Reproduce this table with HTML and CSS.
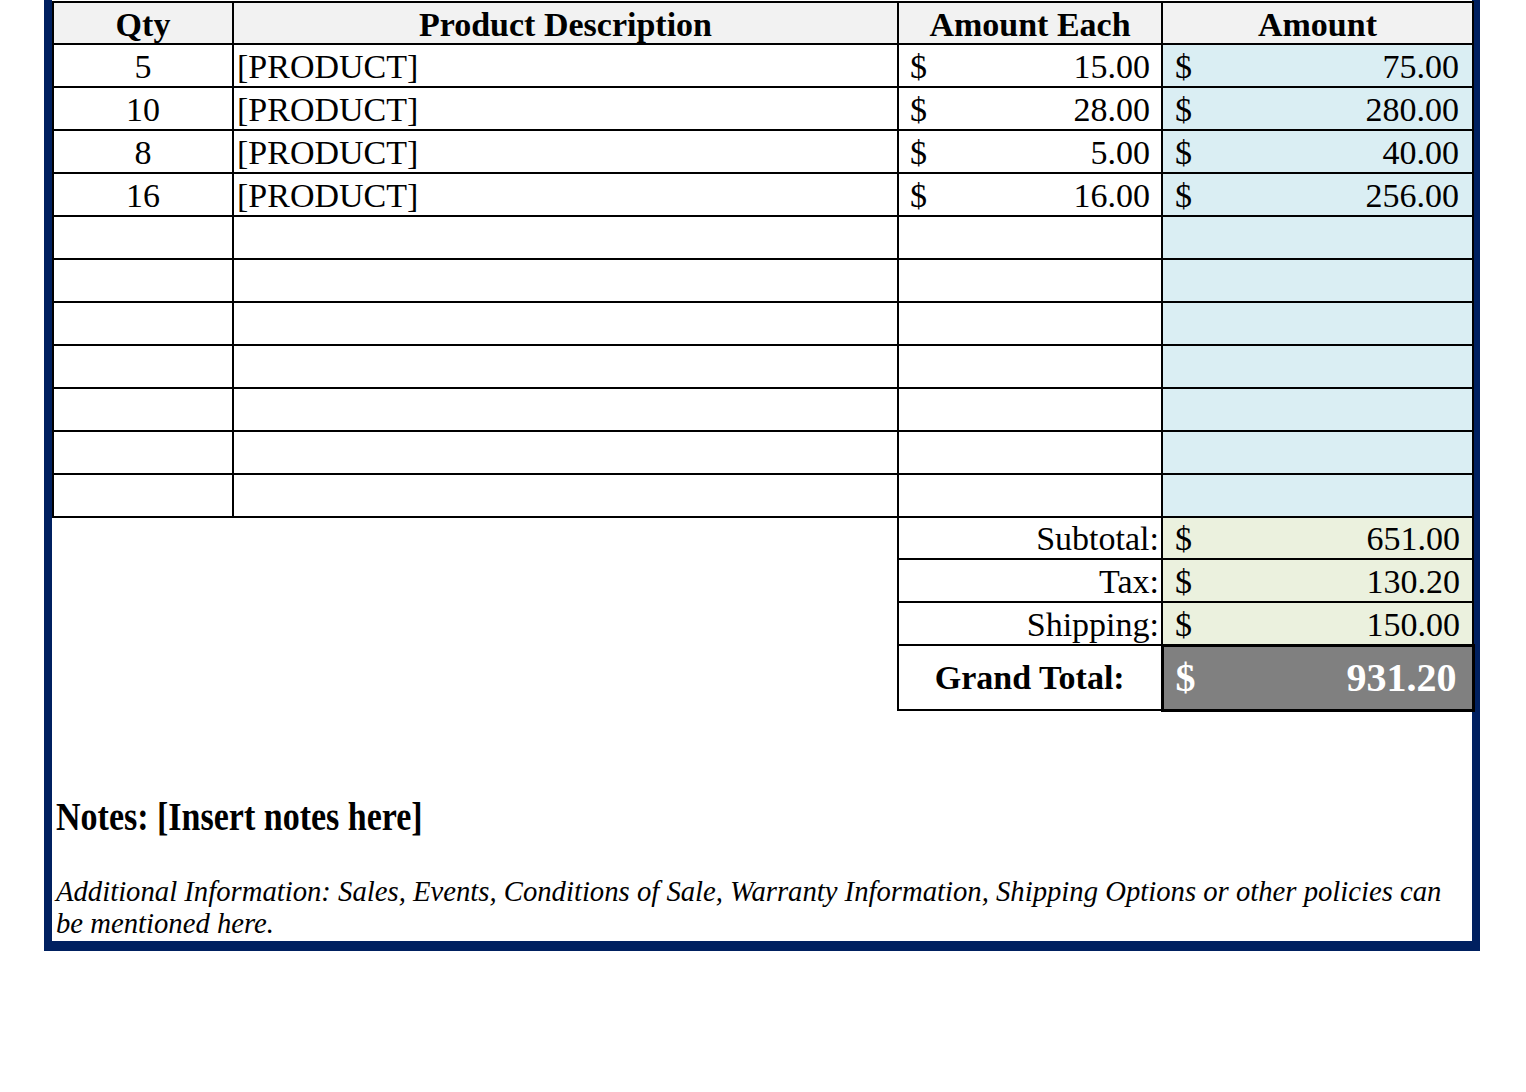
FILE: index.html
```html
<!DOCTYPE html>
<html lang="en">
<head>
<meta charset="utf-8">
<title>Invoice</title>
<link rel="stylesheet" href="styles.css">
</head>
<body>
<div class="sheet">
  <table class="items">
    <colgroup>
      <col class="c-qty">
      <col class="c-desc">
      <col class="c-each">
      <col class="c-amt">
    </colgroup>
    <thead>
      <tr class="head-row">
        <th>Qty</th>
        <th>Product Description</th>
        <th>Amount Each</th>
        <th>Amount</th>
      </tr>
    </thead>
    <tbody>
      <tr class="row">
        <td class="qty">5</td>
        <td class="desc">[PRODUCT]</td>
        <td class="money"><div class="m"><span>$</span><span>15.00</span></div></td>
        <td class="money amt"><div class="m"><span>$</span><span>75.00</span></div></td>
      </tr>
      <tr class="row">
        <td class="qty">10</td>
        <td class="desc">[PRODUCT]</td>
        <td class="money"><div class="m"><span>$</span><span>28.00</span></div></td>
        <td class="money amt"><div class="m"><span>$</span><span>280.00</span></div></td>
      </tr>
      <tr class="row">
        <td class="qty">8</td>
        <td class="desc">[PRODUCT]</td>
        <td class="money"><div class="m"><span>$</span><span>5.00</span></div></td>
        <td class="money amt"><div class="m"><span>$</span><span>40.00</span></div></td>
      </tr>
      <tr class="row">
        <td class="qty">16</td>
        <td class="desc">[PRODUCT]</td>
        <td class="money"><div class="m"><span>$</span><span>16.00</span></div></td>
        <td class="money amt"><div class="m"><span>$</span><span>256.00</span></div></td>
      </tr>
      <tr class="row"><td></td><td></td><td></td><td class="amt"></td></tr>
      <tr class="row"><td></td><td></td><td></td><td class="amt"></td></tr>
      <tr class="row"><td></td><td></td><td></td><td class="amt"></td></tr>
      <tr class="row"><td></td><td></td><td></td><td class="amt"></td></tr>
      <tr class="row"><td></td><td></td><td></td><td class="amt"></td></tr>
      <tr class="row"><td></td><td></td><td></td><td class="amt"></td></tr>
      <tr class="row"><td></td><td></td><td></td><td class="amt"></td></tr>
    </tbody>
    <tfoot>
      <tr class="sub-row first">
        <td class="blank" colspan="2"></td>
        <td class="label">Subtotal:</td>
        <td class="money tot"><div class="m"><span>$</span><span>651.00</span></div></td>
      </tr>
      <tr class="sub-row">
        <td class="blank" colspan="2"></td>
        <td class="label">Tax:</td>
        <td class="money tot"><div class="m"><span>$</span><span>130.20</span></div></td>
      </tr>
      <tr class="sub-row">
        <td class="blank" colspan="2"></td>
        <td class="label">Shipping:</td>
        <td class="money tot"><div class="m"><span>$</span><span>150.00</span></div></td>
      </tr>
      <tr class="grand-row">
        <td class="blank" colspan="2"></td>
        <td class="grand-label">Grand Total:</td>
        <td class="grand"><div class="m"><span>$</span><span>931.20</span></div></td>
      </tr>
    </tfoot>
  </table>
  <p class="notes"><span class="notes-text">Notes: [Insert notes here]</span></p>
  <p class="info">Additional Information: Sales, Events, Conditions of Sale, Warranty Information, Shipping Options or other policies can be mentioned here.</p>
</div>
</body>
</html>
```
FILE: styles.css
```css
html, body {
  margin: 0;
  padding: 0;
  background: #ffffff;
}

body {
  font-family: "Liberation Serif", "Times New Roman", serif;
  color: #000000;
}

.sheet {
  margin-left: 44px;
  width: 1420px;
  border: 8px solid #002060;
  border-top: 0;
  border-bottom-width: 10px;
  padding-top: 1px;
}

.items {
  width: 1420px;
  border-collapse: collapse;
  table-layout: fixed;
  font-size: 34px;
}

.c-qty { width: 180px; }
.c-desc { width: 665px; }
.c-each { width: 264px; }
.c-amt { width: 311px; }

.items th,
.items td {
  border: 2px solid #000000;
  padding: 0;
  line-height: 34px;
  white-space: nowrap;
}

.head-row {
  height: 42px;
  background: #f2f2f2;
}

.items .head-row th {
  font-weight: bold;
  text-align: center;
  vertical-align: middle;
  padding-top: 3px;
}

.row {
  height: 43px;
}

.row td {
  vertical-align: bottom;
  padding-bottom: 2px;
}

.qty {
  text-align: center;
}

.items td.desc {
  padding-left: 3px;
}

.items td.money {
  padding-left: 11px;
  padding-right: 11px;
}

.items td.amt {
  background: #daeef3;
  padding-right: 13px;
}

.m {
  display: flex;
  justify-content: space-between;
}

.items td.amt .m {
  padding-left: 1px;
}

.sub-row {
  height: 43px;
}

.sub-row.first {
  height: 42px;
}

.sub-row td {
  vertical-align: bottom;
  padding-bottom: 2px;
}

.items td.blank {
  border-top: none;
  border-left: none;
  border-bottom: none;
  background: #ffffff;
}

.items td.label {
  text-align: right;
  padding-right: 2px;
}

.items td.tot {
  background: #ebf1de;
  padding-left: 12px;
  padding-right: 12px;
}

.grand-row {
  height: 65px;
}

.items td.grand-label {
  font-weight: bold;
  text-align: center;
  vertical-align: middle;
}

.items td.grand {
  border: 3px solid #000000;
  background: #808080;
  color: #ffffff;
  font-weight: bold;
  font-size: 40px;
  line-height: 40px;
  vertical-align: middle;
  padding: 0 15px 0 12px;
}

.notes {
  margin: 89px 0 0 0;
  padding-left: 4px;
  font-size: 34px;
  font-weight: bold;
  line-height: 36px;
}

.notes-text {
  display: inline-block;
  transform: scaleY(1.15);
  transform-origin: 50% 80%;
}

.info {
  margin: 38px 0 0 0;
  padding: 0 4px 2px 4px;
  font-size: 28.7px;
  font-style: italic;
  line-height: 32px;
}
```
